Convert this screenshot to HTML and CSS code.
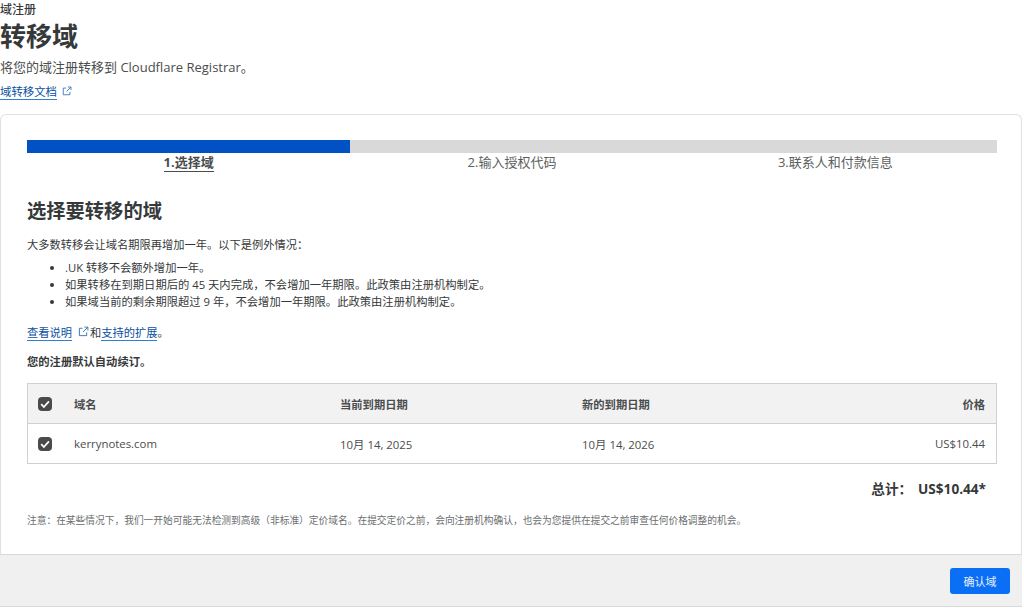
FILE: index.html

```html
<!DOCTYPE html>
<html lang="zh-CN">
<head>
  <meta charset="UTF-8" />
  <title>转移域</title>
  <link rel="stylesheet" href="styles.css">
</head>
<body>
  <header class="page-head">
    <div class="crumb">域注册</div>
    <h1>转移域</h1>
    <p class="lead">将您的域注册转移到 Cloudflare Registrar。</p>
    <a class="link docs" href="#">域转移文档</a>
    <svg class="ext ext-docs" viewBox="0 0 12 12"><path d="M5 2.5H1.5v8h8V7M7 1.2h3.8V5M10.6 1.4 5.5 6.5"/></svg>
  </header>

  <section class="card">
    <div class="progress"><div class="progress-done"></div></div>
    <div class="steps">
      <span class="step active">1.选择域</span>
      <span class="step">2.输入授权代码</span>
      <span class="step">3.联系人和付款信息</span>
    </div>

    <h2>选择要转移的域</h2>
    <p class="intro">大多数转移会让域名期限再增加一年。以下是例外情况：</p>
    <ul class="rules">
      <li>.UK 转移不会额外增加一年。</li>
      <li>如果转移在到期日期后的 45 天内完成，不会增加一年期限。此政策由注册机构制定。</li>
      <li>如果域当前的剩余期限超过 9 年，不会增加一年期限。此政策由注册机构制定。</li>
    </ul>
    <p class="more">
      <a class="link" href="#">查看说明</a>
      <svg class="ext ext-more" viewBox="0 0 12 12"><path d="M5 2.5H1.5v8h8V7M7 1.2h3.8V5M10.6 1.4 5.5 6.5"/></svg>和<a class="link" href="#">支持的扩展</a>。
    </p>
    <p class="auto">您的注册默认自动续订。</p>

    <div class="domains">
      <div class="row row-head">
        <span class="check"><svg viewBox="0 0 14 14"><path d="M3.2 7.2 5.9 10l5-5.6"/></svg></span>
        <span>域名</span>
        <span>当前到期日期</span>
        <span>新的到期日期</span>
        <span class="price">价格</span>
      </div>
      <div class="row">
        <span class="check"><svg viewBox="0 0 14 14"><path d="M3.2 7.2 5.9 10l5-5.6"/></svg></span>
        <span>kerrynotes.com</span>
        <span>10月 14, 2025</span>
        <span>10月 14, 2026</span>
        <span class="price">US$10.44</span>
      </div>
    </div>

    <div class="total"><span>总计：</span><span>US$10.44*</span></div>
    <p class="note">注意：在某些情况下，我们一开始可能无法检测到高级（非标准）定价域名。在提交定价之前，会向注册机构确认，也会为您提供在提交之前审查任何价格调整的机会。</p>
  </section>

  <footer class="actions">
    <button class="confirm">确认域</button>
  </footer>
</body>
</html>
```

FILE: styles.css

```css
body {
  margin: 0;
  background: #ffffff;
  color: #36393a;
  font-family: "Open Sans", "Noto Sans CJK SC", sans-serif;
  font-size: 12px;
  overflow: hidden;
}

.page-head {
  height: 114px;
}
.crumb {
  padding-top: 1px;
  font-size: 12px;
  line-height: 18px;
  font-weight: 500;
}
h1 {
  margin: 0;
  font-size: 26px;
  line-height: 34px;
  font-weight: 700;
}
.lead {
  margin: 4px 0 0;
  font-size: 13px;
  line-height: 20px;
  color: #4a4d4e;
}
.link {
  color: #0a4f9e;
  text-decoration: none;
  border-bottom: 1px solid #2f7fcf;
}
.docs {
  display: inline-block;
  margin-top: 8px;
  font-size: 11.4px;
  line-height: 14px;
}
.ext {
  fill: none;
  stroke: #2f6fb5;
  stroke-width: 1;
}
.ext-docs {
  width: 10px;
  height: 10px;
  margin-left: 2px;
}

.card {
  height: 440px;
  box-sizing: border-box;
  margin-right: 2px;
  padding: 25px 24px 0 26px;
  border: 1px solid #e0e0e0;
  border-bottom: none;
  border-radius: 6px 6px 0 0;
}
.progress {
  height: 13px;
  background: #d9d9d9;
}
.progress-done {
  width: 33.33%;
  height: 100%;
  background: #0051c3;
}
.steps {
  display: grid;
  grid-template-columns: repeat(3, 1fr);
  text-align: center;
  font-size: 13px;
  line-height: 19px;
  color: #5c5f60;
}
.step.active {
  justify-self: center;
  padding-top: 1px;
  font-weight: 700;
  color: #4a4d4e;
  border-bottom: 1px solid #4a4d4e;
  line-height: 16px;
}

h2 {
  margin: 25px 0 0;
  font-size: 19.3px;
  line-height: 28px;
  font-weight: 700;
}
.intro {
  margin: 11px 0 0;
  font-size: 11.25px;
  line-height: 18px;
}
.rules {
  margin: 5px 0 0;
  padding-left: 38px;
  font-size: 11.3px;
  line-height: 17px;
}
.more {
  margin: 14px 0 0;
  font-size: 11.25px;
  line-height: 18px;
}
.ext-more {
  width: 11px;
  height: 11px;
  margin-left: 3px;
  margin-right: 1px;
}
.auto {
  margin: 12px 0 0;
  font-size: 11.3px;
  line-height: 16px;
  font-weight: 700;
}

.domains {
  margin-top: 13px;
  border: 1px solid #d0d0d0;
  font-size: 11.4px;
}
.row {
  display: grid;
  grid-template-columns: 46px 266px 242px 1fr 160px;
  align-items: center;
  height: 39px;
  color: #4a4d4e;
}
.row-head {
  background: #f2f2f2;
  border-bottom: 1px solid #d0d0d0;
  font-size: 11.3px;
  font-weight: 700;
}
.check {
  width: 14px;
  height: 14px;
  margin-left: 10px;
  border-radius: 4px;
  background: #4a4a4a;
  display: flex;
}
.check svg {
  width: 14px;
  height: 14px;
  fill: none;
  stroke: #ffffff;
  stroke-width: 1.8;
}
.price {
  text-align: right;
  padding-right: 11px;
}

.total {
  display: flex;
  justify-content: flex-end;
  gap: 6px;
  margin-top: 16px;
  padding-right: 11px;
  font-size: 13.6px;
  line-height: 18px;
  font-weight: 700;
}
.note {
  margin: 16px 0 0;
  font-size: 9.72px;
  line-height: 14px;
  color: #6b6e6f;
}

.actions {
  display: flex;
  justify-content: flex-end;
  align-items: center;
  box-sizing: border-box;
  height: 53px;
  margin-right: 2px;
  padding-right: 12px;
  background: #f0f0f0;
  border-top: 1px solid #d9d9d9;
  border-bottom: 1px solid #d9d9d9;
}
.confirm {
  width: 60px;
  height: 26px;
  border: none;
  border-radius: 3px;
  background: #0a6ff5;
  color: #e6f0ff;
  font-family: inherit;
  font-size: 11px;
}
```
